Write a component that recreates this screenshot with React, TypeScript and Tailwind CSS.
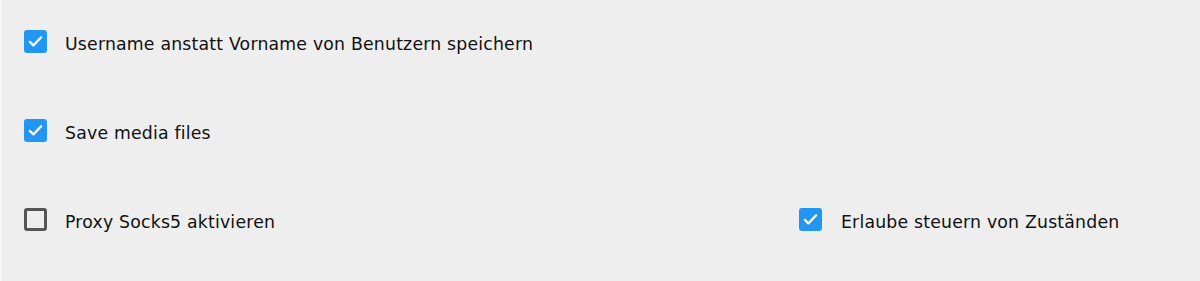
import React from "react";

function Box({ checked }: { checked: boolean }) {
  if (checked) {
    return (
      <span className="flex h-[23px] w-[23px] shrink-0 items-center justify-center rounded-[3px] bg-[#2196f3]">
        <svg width="17" height="17" viewBox="0 0 24 24" fill="none" stroke="white" strokeWidth="3.2" strokeLinecap="round" strokeLinejoin="round">
          <path d="M4 12.5l5 5L20 6" />
        </svg>
      </span>
    );
  }
  return <span className="h-[23px] w-[23px] shrink-0 rounded-[3px] border-[3px] border-[#555555] bg-transparent" />;
}

function Item({ checked, label, gap }: { checked: boolean; label: string; gap: string }) {
  return (
    <label className={`flex h-[23px] items-center ${gap}`}>
      <Box checked={checked} />
      <span
        className="pt-[7px] text-[17.3px] tracking-[0.2px] text-[#111111] whitespace-nowrap"
        style={{ fontFamily: '"DejaVu Sans", sans-serif' }}
      >
        {label}
      </span>
    </label>
  );
}

export default function App() {
  return (
    <div className="h-[281px] w-[1200px] border-l-[2px] border-[#f7f7f7] bg-[#eeeeee]">
      <div className="grid grid-cols-[775px_1fr] gap-y-[66px] pl-[22px] pt-[30px]">
        <Item checked gap="gap-[18px]" label="Username anstatt Vorname von Benutzern speichern" />
        <div />
        <Item checked gap="gap-[18px]" label="Save media files" />
        <div />
        <Item checked={false} gap="gap-[18px]" label="Proxy Socks5 aktivieren" />
        <Item checked gap="gap-[19px]" label="Erlaube steuern von Zuständen" />
      </div>
    </div>
  );
}
